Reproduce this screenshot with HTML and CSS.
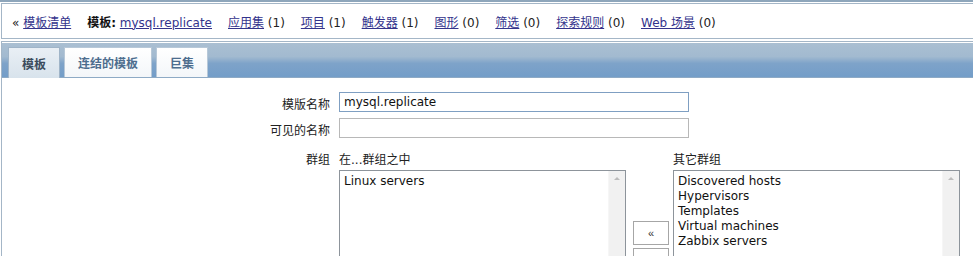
FILE: index.html
```html
<!DOCTYPE html>
<html lang="zh-CN">
<head>
    <meta charset="UTF-8">
    <title>模板</title>
    <link rel="stylesheet" href="styles.css">
</head>
<body>
    <div class="top-strip"></div>

    <div class="nav-box">
        <span class="nav-item">&laquo; <a href="#">模板清单</a></span>
        <span class="nav-item"><b>模板:</b> <a href="#">mysql.replicate</a></span>
        <span class="nav-item"><a href="#">应用集</a> (1)</span>
        <span class="nav-item"><a href="#">项目</a> (1)</span>
        <span class="nav-item"><a href="#">触发器</a> (1)</span>
        <span class="nav-item"><a href="#">图形</a> (0)</span>
        <span class="nav-item"><a href="#">筛选</a> (0)</span>
        <span class="nav-item"><a href="#">探索规则</a> (0)</span>
        <span class="nav-item"><a href="#">Web 场景</a> (0)</span>
    </div>

    <div class="tab-box">
        <div class="tab-header">
            <div class="tab active">模板</div>
            <div class="tab">连结的模板</div>
            <div class="tab">巨集</div>
        </div>

        <div class="form">
            <div class="form-row">
                <label class="form-label">模版名称</label>
                <div class="form-field">
                    <input class="text-input focused" type="text" value="mysql.replicate">
                </div>
            </div>
            <div class="form-row">
                <label class="form-label">可见的名称</label>
                <div class="form-field">
                    <input class="text-input" type="text" value="">
                </div>
            </div>
            <div class="form-row groups-row">
                <label class="form-label">群组</label>
                <div class="form-field group-field">
                    <div class="group-col">
                        <div class="group-title">在...群组之中</div>
                        <div class="listbox">
                            <div class="list-items">
                                <div>Linux servers</div>
                            </div>
                            <div class="scrollbar"><span class="arrow"></span></div>
                        </div>
                    </div>
                    <div class="move-buttons">
                        <button class="move-btn">&laquo;</button>
                        <button class="move-btn">&raquo;</button>
                    </div>
                    <div class="group-col">
                        <div class="group-title">其它群组</div>
                        <div class="listbox">
                            <div class="list-items">
                                <div>Discovered hosts</div>
                                <div>Hypervisors</div>
                                <div>Templates</div>
                                <div>Virtual machines</div>
                                <div>Zabbix servers</div>
                            </div>
                            <div class="scrollbar"><span class="arrow"></span></div>
                        </div>
                    </div>
                </div>
            </div>
        </div>
    </div>
</body>
</html>
```

FILE: styles.css
```css
body {
    margin: 0;
    background-color: #fff;
    font-family: "DejaVu Sans", "Noto Sans CJK SC", sans-serif;
    font-size: 12px;
    color: #222;
    overflow: hidden;
}

.top-strip {
    height: 2px;
    background-color: #8ea6bb;
    border-bottom: 1px solid #fff;
}

.nav-box {
    margin-left: 1px;
    height: 34px;
    border: 1px solid #a4b6c7;
    border-right: none;
    display: flex;
    align-items: center;
    padding-left: 10px;
    white-space: nowrap;
}

.nav-item {
    margin-right: 16px;
}

.nav-item a {
    color: #33338c;
    text-decoration: underline;
}

.nav-item b {
    font-weight: bold;
    color: #111;
}

.tab-box {
    margin-top: 2px;
    margin-left: 1px;
    border: 1px solid #a4b6c7;
    border-right: none;
    border-bottom: none;
    padding-top: 1px;
    height: 250px;
}

.tab-header {
    height: 30px;
    padding: 4px 0 0 6px;
    display: flex;
    align-items: flex-end;
    gap: 4px;
    background: linear-gradient(#aabfd2, #a2bad0 40%, #7ea3c9 60%, #739dc8);
    border-bottom: 1px solid #8eaac5;
}

.tab {
    height: 29px;
    padding: 0 13px;
    display: flex;
    align-items: center;
    font-weight: bold;
    font-size: 12px;
    color: #4d6d8e;
    background: linear-gradient(#ffffff, #f3f6f9);
    border: 1px solid #b7c8d8;
    border-bottom: none;
}

.tab.active {
    color: #3b4b5c;
    background: linear-gradient(#e9eff5, #d8e3ec);
    border-color: #9fb4c8;
    height: 30px;
    margin-bottom: -1px;
}

.form {
    padding-top: 14px;
}

.form-row {
    display: flex;
    margin-bottom: 6px;
}

.form-label {
    width: 328px;
    text-align: right;
    padding-right: 9px;
    padding-top: 3px;
    color: #222;
}

.groups-row {
    margin-top: 15px;
}

.groups-row .form-label {
    padding-top: 0;
    line-height: 15px;
}

.text-input {
    width: 350px;
    height: 20px;
    box-sizing: border-box;
    margin: 0;
    padding: 0 4px;
    border: 1px solid #b8b8b8;
    font-family: "DejaVu Sans", "Noto Sans CJK SC", sans-serif;
    font-size: 12px;
    color: #111;
    outline: none;
}

.text-input.focused {
    border-color: #7f9fc2;
}

.group-field {
    display: flex;
    align-items: flex-start;
}

.group-title {
    height: 15px;
    line-height: 15px;
    margin-bottom: 2px;
}

.listbox {
    width: 287px;
    height: 160px;
    box-sizing: border-box;
    border: 1px solid #8d949b;
    display: flex;
}

.list-items {
    flex: 1;
    padding: 3px 4px;
    line-height: 15px;
    color: #111;
}

.scrollbar {
    width: 17px;
    background-color: #f1f1f1;
    border-left: 1px solid #f6f6f6;
    display: flex;
    justify-content: center;
    padding-top: 6px;
    box-sizing: border-box;
}

.arrow {
    width: 0;
    height: 0;
    border-left: 3px solid transparent;
    border-right: 3px solid transparent;
    border-bottom: 3px solid #bcbcbc;
}

.move-buttons {
    display: flex;
    flex-direction: column;
    gap: 3px;
    margin: 68px 4px 0 7px;
}

.move-btn {
    width: 36px;
    height: 24px;
    padding: 0;
    background-color: #fff;
    border: 1px solid #a6a6a6;
    font-size: 11px;
    color: #333;
}
```
